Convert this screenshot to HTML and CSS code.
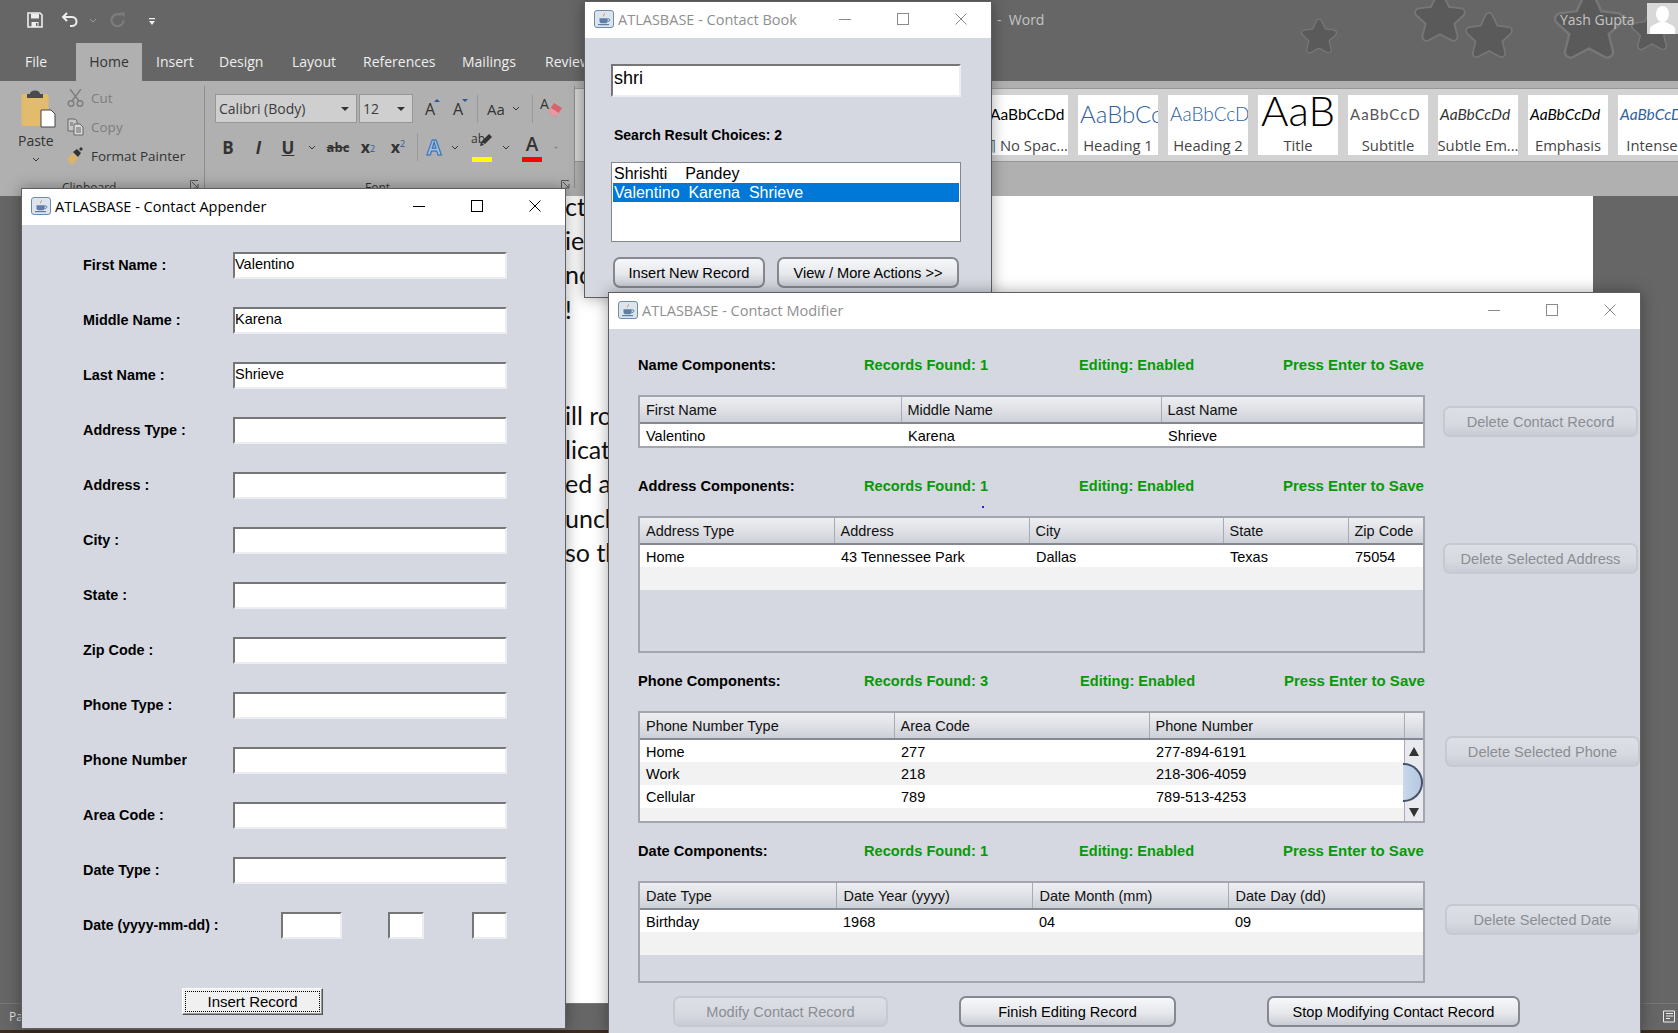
FILE: index.html
```html
<!DOCTYPE html>
<html lang="en">
<head>
  <meta charset="UTF-8" />
  <title>ATLASBASE</title>
  <link rel="stylesheet" href="styles.css">
</head>
<body>
  <svg class="defs" width="0" height="0">
    <symbol id="java" viewBox="0 0 20 18">
      <rect x="0.5" y="0.5" width="19" height="17" rx="2.5" fill="#dce4ee" stroke="#6f8ba8"/>
      <path d="M10.5 2.5c1.5 1.6-1.4 2.6-.4 4.6-2-1.6.7-2.8.4-4.6z" fill="#d9772a"/>
      <path d="M5.5 8.2h8.2v3c0 1.3-1 2-2 2H7.5c-1 0-2-.7-2-2z" fill="#5d7fa6"/>
      <path d="M13.7 9h1.3c1.4 0 1.4 2.4-1.3 2.6" fill="none" stroke="#5d7fa6"/>
      <path d="M4 14.6h11" stroke="#5d7fa6" stroke-width="1.2"/>
    </symbol>
    <symbol id="ctl-min" viewBox="0 0 12 12"><path d="M0 6.5h12" stroke="currentColor" fill="none"/></symbol>
    <symbol id="ctl-max" viewBox="0 0 12 12"><rect x="0.5" y="0.5" width="11" height="11" stroke="currentColor" fill="none"/></symbol>
    <symbol id="ctl-close" viewBox="0 0 12 12"><path d="M0.5 0.5l11 11M11.5 0.5l-11 11" stroke="currentColor" fill="none"/></symbol>
    <symbol id="chev" viewBox="0 0 8 5"><path d="M1 1l3 3 3-3" stroke="currentColor" fill="none"/></symbol>
    <symbol id="star" viewBox="0 0 60 60">
      <path d="M30 8l7 15 16 2-12 11 4 16-15-8-15 8 4-16L7 25l16-2z" fill="none" stroke="#777" stroke-width="11" stroke-linejoin="round"/>
      <path d="M30 8l7 15 16 2-12 11 4 16-15-8-15 8 4-16L7 25l16-2z" fill="#5a5a5a" stroke="#5a5a5a" stroke-width="7" stroke-linejoin="round"/>
    </symbol>
  </svg>

  <div class="word">
    <div class="titlebar">
      <svg class="qat-save" width="16" height="16" viewBox="0 0 16 16"><path d="M1 1h12l2 2v12H1z" fill="none" stroke="#eee" stroke-width="1.6"/><path d="M4 1.5h8v5H4zM4.5 10h7v5h-7z" fill="#eee"/><path d="M9 11h1.5v3H9z" fill="#666"/></svg>
      <svg class="qat-undo" width="18" height="16" viewBox="0 0 18 16"><path d="M6 1L2 5l4 4" fill="none" stroke="#eee" stroke-width="2"/><path d="M2.5 5H11c6 0 6 9 0 9H9" fill="none" stroke="#eee" stroke-width="2"/></svg>
      <svg class="qat-chev" width="8" height="5"><use href="#chev"/></svg>
      <svg class="qat-redo" width="16" height="16" viewBox="0 0 16 16"><path d="M11 3.2a6 6 0 1 0 2.6 5" fill="none" stroke="#7d7d7d" stroke-width="2.2"/><path d="M9.5 0.5h5v5z" fill="#7d7d7d"/></svg>
      <svg class="qat-more" width="6" height="8" viewBox="0 0 6 8"><path d="M0 0h6v1.2H0zM0 3h6L3 7z" fill="#eee"/></svg>
      <svg class="star s1" width="38" height="38"><use href="#star"/></svg>
      <svg class="star s2" width="54" height="54"><use href="#star"/></svg>
      <svg class="star s3" width="50" height="50"><use href="#star"/></svg>
      <svg class="star s4" width="74" height="74"><use href="#star"/></svg>
      <svg class="star s5" width="44" height="44"><use href="#star"/></svg>
      <span class="doc-name">-&nbsp; Word</span>
      <span class="user-name">Yash Gupta</span>
      <div class="avatar">
        <svg width="31" height="31" viewBox="0 0 31 31"><ellipse cx="15.5" cy="11" rx="6.5" ry="8" fill="#fff"/><path d="M3 31v-5c0-4 7-5 9-7h7c2 2 9 3 9 7v5z" fill="#fff"/></svg>
      </div>
    </div>

    <div class="tabs">
      <span class="tab tab-file">File</span>
      <span class="tab tab-home">Home</span>
      <span class="tab tab-insert">Insert</span>
      <span class="tab tab-design">Design</span>
      <span class="tab tab-layout">Layout</span>
      <span class="tab tab-refs">References</span>
      <span class="tab tab-mail">Mailings</span>
      <span class="tab tab-review">Review</span>
    </div>

    <div class="ribbon">
      <div class="group group-clip">
        <div class="paste">
          <svg width="35" height="38" viewBox="0 0 35 38">
            <rect x="0.5" y="4" width="27" height="32" rx="2" fill="#e3bb6c"/>
            <path d="M9 4c0-2 2-3.500 5-3.500S19 2 19 4h3v4H6V4z" fill="#4a4a4a"/>
            <path d="M20 20h10l4 4v13H20z" fill="#fff" stroke="#444"/>
          </svg>
          <span class="paste-label">Paste</span>
          <svg class="chev-paste" width="8" height="5"><use href="#chev"/></svg>
        </div>
        <div class="clip-tools">
          <div class="clip-row muted">
            <svg width="17" height="18" viewBox="0 0 17 18"><path d="M3 0l9 12M14 0L5 12" stroke="#7d7d7d" stroke-width="1.4" fill="none"/><circle cx="4" cy="14.500" r="2.800" fill="none" stroke="#7d7d7d" stroke-width="1.400"/><circle cx="13" cy="14.500" r="2.800" fill="none" stroke="#7d7d7d" stroke-width="1.400"/></svg>
            <span>Cut</span>
          </div>
          <div class="clip-row muted">
            <svg width="17" height="18" viewBox="0 0 17 18"><path d="M1 1h7l2 2v10H1z" fill="#c8c8c8" stroke="#666"/><path d="M7 6h6l3 3v8H7z" fill="#d8d8d8" stroke="#666"/><path d="M9 10h5M9 12h5M9 14h5M3 5h3M3 7h3" stroke="#666"/></svg>
            <span>Copy</span>
          </div>
          <div class="clip-row">
            <svg width="17" height="18" viewBox="0 0 17 18"><path d="M0 12l6-6 5 5-5 6H3z" fill="#dcb36c"/><path d="M6 5l4-3 4 4-3 4z" fill="#333"/><path d="M14 0l2 2-2 2-2-2z" fill="#333"/></svg>
            <span>Format Painter</span>
          </div>
        </div>
        <span class="group-label label-clip">Clipboard</span>
        <svg class="launcher launch-clip" width="9" height="9" viewBox="0 0 9 9"><path d="M0.500 8V0.500H8M2 2l6 6M8 4v4H4" stroke="#555" fill="none"/></svg>
      </div>

      <div class="group group-font">
        <div class="font-row row-top">
          <div class="combo combo-font"><span>Calibri (Body)</span><i class="caret"></i></div>
          <div class="combo combo-size"><span>12</span><i class="caret"></i></div>
          <span class="tool w34 glyph-a">A<i class="tip"></i></span>
          <span class="tool w22 glyph-a">A<i class="tip tip-down"></i></span>
          <span class="tool-sep w16"></span>
          <span class="tool w22 glyph-aa">Aa</span>
          <span class="tool w18"><svg width="8" height="5"><use href="#chev"/></svg></span>
          <span class="tool-sep w14"></span>
          <span class="tool w26 glyph-clear">
            <span>A</span>
            <svg width="18" height="16" viewBox="0 0 18 16"><path d="M9 1l8 5-6 9-8-5z" fill="#d8626e"/><path d="M3 10l3-4 8 5-3 4z" fill="#e89aa2"/></svg>
          </span>
        </div>
        <div class="font-row row-bottom">
          <span class="tool w30 glyph-b">B</span>
          <span class="tool w31 glyph-i">I</span>
          <span class="tool w28 glyph-u">U</span>
          <span class="tool w20"><svg width="8" height="5"><use href="#chev"/></svg></span>
          <span class="tool w32 glyph-abc">abc</span>
          <span class="tool w28 glyph-x">x<sub>2</sub></span>
          <span class="tool w32 glyph-x">x<sup>2</sup></span>
          <span class="tool-sep w6"></span>
          <span class="tool w28 glyph-blue">A</span>
          <span class="tool w14"><svg width="8" height="5"><use href="#chev"/></svg></span>
          <span class="tool w40 glyph-mark">
            <span>ab</span>
            <svg width="18" height="16" viewBox="0 0 18 16"><path d="M14 1l3 3-7 7-4-2z" fill="#333"/><path d="M6 9l3 3-4 1z" fill="#333"/></svg>
            <i class="bar bar-yellow"></i>
          </span>
          <span class="tool w8"><svg width="8" height="5"><use href="#chev"/></svg></span>
          <span class="tool w44 glyph-red">A<i class="bar bar-red"></i></span>
          <span class="tool w4"><svg width="8" height="5"><use href="#chev"/></svg></span>
        </div>
        <span class="group-label label-font">Font</span>
        <svg class="launcher launch-font" width="9" height="9" viewBox="0 0 9 9"><path d="M0.500 8V0.500H8M2 2l6 6M8 4v4H4" stroke="#555" fill="none"/></svg>
      </div>

      <div class="group group-styles">
        <div class="gallery">
          <div class="style-tile"><span class="sample s-normal">AaBbCcDd</span><span class="style-name name-clip">¶ No Spac...</span></div>
          <div class="style-tile"><span class="sample s-h1">AaBbCc</span><span class="style-name">Heading 1</span></div>
          <div class="style-tile"><span class="sample s-h2">AaBbCcD</span><span class="style-name">Heading 2</span></div>
          <div class="style-tile"><span class="sample s-title">AaB</span><span class="style-name">Title</span></div>
          <div class="style-tile"><span class="sample s-sub">AaBbCcD</span><span class="style-name">Subtitle</span></div>
          <div class="style-tile"><span class="sample s-subtle">AaBbCcDd</span><span class="style-name">Subtle Em...</span></div>
          <div class="style-tile"><span class="sample s-emph">AaBbCcDd</span><span class="style-name">Emphasis</span></div>
          <div class="style-tile"><span class="sample s-intense">AaBbCcDd</span><span class="style-name">Intense E</span></div>
        </div>
        <span class="group-label label-styles">Styles</span>
      </div>
    </div>

    <div class="doc">
      <div class="page">
        <p>ct</p>
        <p>ie</p>
        <p>nd</p>
        <p>!</p>
        <p class="para-gap">ill ro</p>
        <p>licat</p>
        <p>ed a</p>
        <p>unch</p>
        <p>so th</p>
      </div>
    </div>

    <div class="statusbar">
      <span class="status-text">Page</span>
      <svg class="status-icon" width="14" height="14" viewBox="0 0 14 14"><path d="M0.500 1h11v11h-11zM3 3.500h7M3 6h7M3 8.500h4" stroke="#eee" fill="none"/></svg>
    </div>
    <div class="taskbar-edge"></div>
  </div>

  <!-- Contact Appender -->
  <div class="win win-appender">
    <div class="win-title">
      <svg class="java-icon" width="20" height="18"><use href="#java"/></svg>
      <span class="win-name">ATLASBASE - Contact Appender</span>
      <div class="win-ctl">
        <span><svg width="12" height="12"><use href="#ctl-min"/></svg></span>
        <span><svg width="12" height="12"><use href="#ctl-max"/></svg></span>
        <span><svg width="12" height="12"><use href="#ctl-close"/></svg></span>
      </div>
    </div>
    <div class="win-body appender-body">
      <div class="form-grid">
        <label>First Name :</label><div class="field">Valentino</div>
        <label>Middle Name :</label><div class="field">Karena</div>
        <label>Last Name :</label><div class="field">Shrieve</div>
        <label>Address Type :</label><div class="field"></div>
        <label>Address :</label><div class="field"></div>
        <label>City :</label><div class="field"></div>
        <label>State :</label><div class="field"></div>
        <label>Zip Code :</label><div class="field"></div>
        <label>Phone Type :</label><div class="field"></div>
        <label class="label-cut">Phone Number</label><div class="field"></div>
        <label>Area Code :</label><div class="field"></div>
        <label>Date Type :</label><div class="field"></div>
        <label class="label-date">Date (yyyy-mm-dd) :</label>
        <div class="date-fields">
          <div class="field f-year"></div>
          <div class="field f-month"></div>
          <div class="field f-day"></div>
        </div>
      </div>
      <button class="insert-btn"><span>Insert Record</span></button>
    </div>
  </div>

  <!-- Contact Book -->
  <div class="win win-book inactive">
    <div class="win-title">
      <svg class="java-icon" width="20" height="18"><use href="#java"/></svg>
      <span class="win-name">ATLASBASE - Contact Book</span>
      <div class="win-ctl">
        <span><svg width="12" height="12"><use href="#ctl-min"/></svg></span>
        <span><svg width="12" height="12"><use href="#ctl-max"/></svg></span>
        <span><svg width="12" height="12"><use href="#ctl-close"/></svg></span>
      </div>
    </div>
    <div class="win-body book-body">
      <div class="field search-field">shri</div>
      <div class="choices-label">Search Result Choices: 2</div>
      <div class="result-list">
        <div class="result">Shrishti    Pandey</div>
        <div class="result selected">Valentino  Karena  Shrieve</div>
      </div>
      <div class="book-actions">
        <button class="btn btn-new">Insert New Record</button>
        <button class="btn btn-view">View / More Actions &gt;&gt;</button>
      </div>
    </div>
  </div>

  <!-- Contact Modifier -->
  <div class="win win-modifier inactive">
    <div class="win-title">
      <svg class="java-icon" width="20" height="18"><use href="#java"/></svg>
      <span class="win-name">ATLASBASE - Contact Modifier</span>
      <div class="win-ctl">
        <span><svg width="12" height="12"><use href="#ctl-min"/></svg></span>
        <span><svg width="12" height="12"><use href="#ctl-max"/></svg></span>
        <span><svg width="12" height="12"><use href="#ctl-close"/></svg></span>
      </div>
    </div>
    <div class="win-body modifier-body">
      <i class="blue-dot"></i>

      <section class="comp comp-name">
        <div class="comp-main">
          <div class="comp-head">
            <b>Name Components:</b><b class="ok">Records Found: 1</b><b class="ok">Editing: Enabled</b><b class="ok">Press Enter to Save</b>
          </div>
          <div class="tbl">
            <table class="t-name">
              <thead><tr><th>First Name</th><th>Middle Name</th><th>Last Name</th></tr></thead>
              <tbody><tr><td>Valentino</td><td>Karena</td><td>Shrieve</td></tr></tbody>
            </table>
          </div>
        </div>
        <button class="btn off del-contact">Delete Contact Record</button>
      </section>

      <section class="comp comp-address">
        <div class="comp-main">
          <div class="comp-head">
            <b>Address Components:</b><b class="ok">Records Found: 1</b><b class="ok">Editing: Enabled</b><b class="ok">Press Enter to Save</b>
          </div>
          <div class="tbl tbl-address">
            <table class="t-address">
              <thead><tr><th>Address Type</th><th>Address</th><th>City</th><th>State</th><th>Zip Code</th></tr></thead>
              <tbody>
                <tr><td>Home</td><td>43 Tennessee Park</td><td>Dallas</td><td>Texas</td><td>75054</td></tr>
                <tr class="alt"><td></td><td></td><td></td><td></td><td></td></tr>
              </tbody>
            </table>
          </div>
        </div>
        <button class="btn off del-address">Delete Selected Address</button>
      </section>

      <section class="comp comp-phone">
        <div class="comp-main">
          <div class="comp-head head-phone">
            <b>Phone Components:</b><b class="ok">Records Found: 3</b><b class="ok">Editing: Enabled</b><b class="ok">Press Enter to Save</b>
          </div>
          <div class="tbl tbl-phone">
            <table class="t-phone">
              <thead><tr><th>Phone Number Type</th><th>Area Code</th><th>Phone Number</th><th></th></tr></thead>
              <tbody>
                <tr><td>Home</td><td>277</td><td>277-894-6191</td>
                  <td rowspan="4" class="sb-cell">
                    <div class="scrollbar">
                      <i class="arrow-up"></i>
                      <i class="thumb"></i>
                      <i class="arrow-down"></i>
                    </div>
                  </td>
                </tr>
                <tr class="alt"><td>Work</td><td>218</td><td>218-306-4059</td></tr>
                <tr><td>Cellular</td><td>789</td><td>789-513-4253</td></tr>
                <tr class="alt short"><td></td><td></td><td></td></tr>
              </tbody>
            </table>
          </div>
        </div>
        <button class="btn off del-phone">Delete Selected Phone</button>
      </section>

      <section class="comp comp-date">
        <div class="comp-main">
          <div class="comp-head">
            <b>Date Components:</b><b class="ok">Records Found: 1</b><b class="ok">Editing: Enabled</b><b class="ok">Press Enter to Save</b>
          </div>
          <div class="tbl tbl-date">
            <table class="t-date">
              <thead><tr><th>Date Type</th><th>Date Year (yyyy)</th><th>Date Month (mm)</th><th>Date Day (dd)</th></tr></thead>
              <tbody>
                <tr><td>Birthday</td><td>1968</td><td>04</td><td>09</td></tr>
                <tr class="alt"><td></td><td></td><td></td><td></td></tr>
              </tbody>
            </table>
          </div>
        </div>
        <button class="btn off del-date">Delete Selected Date</button>
      </section>

      <div class="modifier-actions">
        <button class="btn off btn-modify">Modify Contact Record</button>
        <button class="btn btn-finish">Finish Editing Record</button>
        <button class="btn btn-stop">Stop Modifying Contact Record</button>
      </div>
    </div>
  </div>
</body>
</html>
```

FILE: styles.css
```css
html, body { margin: 0; padding: 0; }
body { width: 1678px; height: 1033px; overflow: hidden; position: relative; background: #666; font-family: "Liberation Sans", Arial, sans-serif; color: #000; }
.defs { position: absolute; }
button { font-family: inherit; }
p { margin: 0; }

/* word behind the windows */
.word { height: 1033px; display: flex; flex-direction: column; font-family: "Open Sans", sans-serif; background: #666; }
.titlebar { height: 43px; flex: none; position: relative; color: #ddd; }
.qat-save { position: absolute; left: 27px; top: 12px; }
.qat-undo { position: absolute; left: 61px; top: 12px; }
.qat-chev { position: absolute; left: 89px; top: 18px; color: #999; }
.qat-redo { position: absolute; left: 110px; top: 12px; }
.qat-more { position: absolute; left: 149px; top: 18px; }
.star { position: absolute; }
.s1 { left: 1300px; top: 17px; }
.s2 { left: 1413px; top: -10px; }
.s3 { left: 1464px; top: 10px; }
.s4 { left: 1552px; top: -12px; }
.s5 { left: 1630px; top: 8px; }
.doc-name { position: absolute; left: 997px; top: 10px; font-size: 14px; color: #c4c4c4; }
.user-name { position: absolute; left: 1560px; top: 10px; font-size: 14px; color: #c4c4c4; }
.avatar { position: absolute; left: 1647px; top: 3px; width: 31px; height: 31px; background: #d8d8d8; overflow: hidden; }

.tabs { height: 38px; flex: none; display: flex; font-size: 14px; color: #eee; }
.tab { line-height: 38px; flex: none; }
.tab-file { margin-left: 25px; width: 51px; }
.tab-home { width: 66px; background: #b0b0b0; color: #333; text-align: center; }
.tab-insert { margin-left: 14px; width: 63px; }
.tab-design { width: 73px; }
.tab-layout { width: 71px; }
.tab-refs { width: 99px; }
.tab-mail { width: 83px; }

.ribbon { height: 115px; flex: none; background: #b0b0b0; display: flex; color: #333; position: relative; }
.group { position: relative; flex: none; }
.group-clip { width: 204px; display: flex; border-right: 1px solid #8c8c8c; margin: 5px 0 8px; height: 102px; }
.paste { width: 58px; padding: 4px 0 0 21px; box-sizing: border-box; flex: none; position: relative; }
.paste svg { display: block; }
.paste-label { position: absolute; left: 18px; top: 45px; font-size: 14px; }
.chev-paste { position: absolute; left: 32px; top: 71px; }
.clip-tools { margin: -3px 0 0 9px; }
.clip-row { height: 29px; display: flex; align-items: center; gap: 7px; font-size: 13.5px; white-space: nowrap; }
.clip-row.muted { color: #7d7d7d; }
.group-label { position: absolute; font-size: 12px; color: #333; }
.label-clip { left: 62px; top: 93px; }
.launch-clip { position: absolute; left: 190px; top: 94px; }

.group-font { width: 370px; height: 102px; margin: 5px 0 8px; border-right: 1px solid #8c8c8c; padding-left: 8px; box-sizing: border-box; }
.font-row { display: flex; align-items: center; }
.row-top { height: 29px; margin: 8px 0 0 2px; }
.row-bottom { height: 30px; margin-top: 9px; }
.combo { height: 29px; box-sizing: border-box; background: #cfcfcf; border: 1px solid #979797; display: flex; align-items: center; justify-content: space-between; padding: 0 7px 0 3px; font-size: 14px; flex: none; color: #3c3c3c; }
.combo-font { width: 142px; margin-right: 2px; }
.combo-size { width: 54px; }
.caret { border: 4px solid transparent; border-top-color: #333; border-bottom: 0; }
.tool { flex: none; text-align: center; position: relative; display: flex; align-items: center; justify-content: center; height: 28px; color: #333; }
.tool i { font-style: normal; }
.tool-sep { flex: none; height: 28px; position: relative; }
.tool-sep::after { content: ""; position: absolute; left: 50%; top: 0; bottom: 0; width: 1px; background: #999; }
.w4 { width: 4px; } .w6 { width: 6px; } .w8 { width: 8px; } .w14 { width: 14px; } .w16 { width: 16px; } .w18 { width: 18px; } .w20 { width: 20px; } .w22 { width: 22px; }
.w26 { width: 26px; } .w28 { width: 28px; } .w30 { width: 30px; } .w31 { width: 31px; } .w32 { width: 32px; } .w34 { width: 34px; } .w40 { width: 40px; } .w44 { width: 44px; }
.glyph-a { font-size: 16px; }
.tip { position: absolute; right: 7px; top: 4px; border: 3px solid transparent; border-bottom: 3px solid #2a5b94; border-top: 0; }
.w22 .tip { right: 1px; }
.tip-down { border-bottom: 0; border-top: 3px solid #2a5b94; }
.glyph-aa { font-size: 15px; }
.glyph-clear > span { position: absolute; left: 1px; top: -1px; font-size: 14px; }
.glyph-clear svg { position: absolute; left: 6px; top: 7px; }
.glyph-b { font-size: 17px; font-weight: 700; }
.glyph-i { font-size: 17px; font-weight: 700; font-style: italic; }
.glyph-u { font-size: 17px; font-weight: 700; text-decoration: underline; }
.glyph-abc { font-size: 13px; font-weight: 700; text-decoration: line-through; }
.glyph-x { font-size: 16px; font-weight: 700; line-height: 28px; }
.glyph-x sub, .glyph-x sup { font-size: 9px; font-weight: 400; color: #2a5b94; line-height: 0; }
.glyph-x sup { position: relative; top: -3px; }
.glyph-x sub { position: relative; top: 2px; }
.glyph-blue { font-size: 21px; font-weight: 700; color: #a9c4e6; -webkit-text-stroke: 1px #2a6db5; }
.glyph-mark > span { position: absolute; left: 9px; top: -3px; font-size: 12px; }
.glyph-mark svg { position: absolute; left: 13px; top: 0; }
.glyph-red { font-size: 19px; font-weight: 600; align-items: flex-start; line-height: 22px; }
.bar { position: absolute; left: 50%; margin-left: -10px; bottom: -1px; width: 20px; height: 5px; }
.bar-yellow { background: #ffff00; }
.bar-red { background: #ff0000; }
.label-font { left: 160px; top: 93px; }
.launch-font { position: absolute; left: 356px; top: 94px; }

.group-styles { flex: 1; min-width: 0; overflow: hidden; }
.gallery { margin-top: 7px; height: 74px; box-sizing: border-box; padding: 6px 0 0 413px; background: #d2d2d2; border-top: 1px solid #979797; border-bottom: 1px solid #979797; display: flex; gap: 10px; }
.style-tile { flex: none; width: 80px; height: 60px; background: #fff; display: flex; flex-direction: column; align-items: center; overflow: hidden; color: #444; }
.sample { height: 38px; line-height: 38px; width: 78px; white-space: nowrap; overflow: hidden; font-family: "Lato", sans-serif; font-size: 15.500px; flex: none; text-align: left; padding-left: 2px; color: #000; }
.s-h1 { font-size: 24px; color: #2f5f9e; font-weight: 300; }
.s-h2 { font-size: 19px; color: #2f5f9e; font-weight: 300; }
.s-title { font-size: 42px; line-height: 30px; font-weight: 300; padding-left: 4px; }
.s-sub { font-size: 15px; color: #555; letter-spacing: 1px; }
.s-subtle { font-style: italic; color: #333; }
.s-emph { font-style: italic; }
.s-intense { font-style: italic; color: #2f5f9e; }
.style-name { font-size: 14.800px; line-height: 24px; white-space: nowrap; }
.name-clip { align-self: flex-end; }
.label-styles { left: 293px; top: 97px; }

.doc { flex: 1; min-height: 0; background: #666; display: flex; overflow: hidden; }
.page { margin-left: 300px; width: 1293px; box-sizing: border-box; padding-left: 265px; background: #fff; font-family: "Lato", sans-serif; font-size: 25px; color: #111; }
.page p { line-height: 20px; margin-bottom: 14.200px; white-space: nowrap; }
.page .para-gap { margin-top: 86.500px; }
.statusbar { height: 27px; flex: none; background: #666; border-top: 1px solid #777; box-sizing: border-box; position: relative; color: #ddd; font-size: 12px; line-height: 25px; padding-left: 9px; }
.status-icon { position: absolute; left: 1663px; top: 6px; }
.taskbar-edge { height: 3px; flex: none; background: #3b2a1e; }

/* swing windows */
.win { position: absolute; box-sizing: border-box; background: #d5d8e0; border: 1px solid #5f5f5f; box-shadow: 0 0 14px rgba(0, 0, 0, 0.35); display: flex; flex-direction: column; overflow: hidden; }
.win-appender { left: 21px; top: 188px; width: 545px; height: 841px; }
.win-book { left: 584px; top: 1px; width: 408px; height: 297px; }
.win-modifier { left: 608px; top: 292px; width: 1033px; height: 741px; border-bottom: 0; }
.win-title { height: 36px; box-sizing: border-box; padding: 0 0 2px 9px; flex: none; background: #fff; display: flex; align-items: center; font-family: "Open Sans", sans-serif; font-size: 14.500px; color: #000; }
.inactive .win-title { color: #8f8f8f; }
.java-icon { flex: none; margin-right: 4px; }
.win-name { flex: 1; white-space: nowrap; }
.win-ctl { display: flex; padding-right: 1px; }
.win-ctl span { width: 58px; height: 34px; display: flex; align-items: center; justify-content: center; }
.inactive .win-ctl { color: #8a8a8a; }
.win-body { flex: 1; min-height: 0; position: relative; }

.field { box-sizing: border-box; height: 27px; background: #fff; border: 2px solid; border-color: #767676 #ecedf0 #ecedf0 #767676; font-size: 14.500px; line-height: 21px; white-space: nowrap; }

.appender-body { padding: 27px 0 0 61px; }
.form-grid { display: grid; grid-template-columns: 150px 274px; row-gap: 28px; align-items: center; }
.form-grid label { font-size: 14.400px; font-weight: 700; white-space: nowrap; margin-bottom: 2px; }
.form-grid .label-cut { width: 104px; overflow: hidden; letter-spacing: 0.15px; }
.form-grid .label-date { font-size: 14.100px; }
.date-fields { display: flex; padding-left: 48px; }
.f-year { width: 61px; }
.f-month { width: 36px; margin-left: 46px; }
.f-day { width: 35px; margin-left: 48px; }
.insert-btn { display: block; margin: 49px 0 0 99px; width: 141px; height: 27px; padding: 2px; background: #f0f0f0; border: 1px solid; border-color: #fff #555 #555 #fff; box-shadow: inset -1px -1px 0 #999; font-size: 15px; }
.insert-btn span { display: block; height: 100%; line-height: 20px; border: 1px dotted #000; box-sizing: border-box; }

.btn { box-sizing: border-box; height: 31px; padding: 0; border: 2px solid #85888f; border-radius: 7px; background: linear-gradient(#f6f7f9, #e6e8ec 55%, #c9ccd4); font-size: 14.600px; color: #000; white-space: nowrap; flex: none; }
.btn.off { border-color: #c6c9d1; background: linear-gradient(#dcdfe5, #d6d9e0 60%, #c9ccd4); color: #8b8d93; }

.book-body { padding: 26px 0 0 26px; }
.search-field { width: 350px; height: 33px; font-size: 18px; line-height: 25px; padding-left: 1px; }
.choices-label { margin: 28px 0 0 3px; font-size: 14px; font-weight: 700; line-height: 20px; }
.result-list { width: 350px; height: 80px; box-sizing: border-box; margin-top: 17px; background: #fff; border: 1px solid #85888f; padding: 1px; font-size: 16px; }
.result { height: 19px; line-height: 19px; padding-left: 1px; white-space: pre; }
.result.selected { background: #0078d7; color: #fff; }
.book-actions { display: flex; margin: 15px 0 0 2px; gap: 12px; }
.btn-new { width: 152px; }
.btn-view { width: 182px; }

.modifier-body { padding: 26px 0 0 29px; }
.blue-dot { position: absolute; left: 373px; top: 177px; width: 2px; height: 2px; background: #2222cc; }
.comp { display: flex; align-items: flex-start; gap: 18px; }
.comp-main { width: 787px; flex: none; }
.comp-head { display: grid; grid-template-columns: 226px 215px 204px 142px; height: 20px; line-height: 20px; font-size: 14.600px; white-space: nowrap; }
.head-phone { grid-template-columns: 226px 216px 204px 141px; }
.ok { color: #069b06; font-size: 14.600px; }
.ok:last-child { font-size: 15px; }
.comp-address { margin-top: 28px; }
.comp-phone, .comp-date { margin-top: 18px; }

.tbl { margin-top: 20px; box-sizing: border-box; border: 2px solid #a3a6ae; overflow: hidden; }
.tbl table { width: 100%; border-collapse: collapse; table-layout: fixed; font-size: 14.500px; }
.tbl-address { height: 137px; }
.tbl-phone { height: 112px; }
.tbl-date { height: 102px; }
th { height: 26px; padding: 0 0 0 6px; text-align: left; font-weight: 400; background: linear-gradient(#eceef1, #dfe1e6 50%, #cdd0d8); border-right: 1px solid #a8abb3; border-bottom: 2px solid #85888f; box-sizing: border-box; white-space: nowrap; overflow: hidden; color: #111; }
th:last-child { border-right: 0; }
td { height: 23px; padding: 0 0 0 6px; background: #fff; box-sizing: border-box; white-space: nowrap; }
td:not(:first-child), .t-date th:not(:first-child) { padding-left: 7px; }
tbody tr:first-child td { padding-top: 1px; }
.alt td { background: #f2f2f2; }
.short td { height: 16px; }

.t-name th:nth-child(1) { width: 261px; }
.t-name th:nth-child(2) { width: 260px; }
.t-address th:nth-child(1) { width: 194px; }
.t-address th:nth-child(2) { width: 195px; }
.t-address th:nth-child(3) { width: 194px; }
.t-address th:nth-child(4) { width: 125px; }
.t-phone th:nth-child(1) { width: 254px; }
.t-phone th:nth-child(2) { width: 255px; }
.t-phone th:nth-child(3) { width: 255px; }
.t-date th:nth-child(1) { width: 196px; }
.t-date th:nth-child(2) { width: 196px; }
.t-date th:nth-child(3) { width: 196px; }

tbody .sb-cell { padding: 0; background: #e9eaef; vertical-align: top; border-left: 1px solid #a8abb3; }
.scrollbar { height: 82px; position: relative; }
.arrow-up, .arrow-down { position: absolute; left: 4px; border: 5px solid transparent; }
.arrow-up { top: 6px; border-top: 0; border-bottom: 9px solid #333; }
.arrow-down { bottom: 6px; border-bottom: 0; border-top: 9px solid #333; }
.thumb { position: absolute; left: -2px; top: 22px; width: 20px; height: 39px; box-sizing: border-box; border: 2px solid #43536b; border-left: 0; border-radius: 0 20px 20px 0 / 0 20px 20px 0; background: linear-gradient(90deg, #c9d8ea, #b4c8e0); }

.del-contact { width: 195px; margin-top: 51px; }
.del-address { width: 195px; margin-top: 67px; }
.del-phone { width: 195px; margin: 65px 0 0 2px; }
.del-date { width: 195px; margin: 63px 0 0 2px; }

.modifier-actions { display: flex; margin: 13px 0 0 35px; }
.btn-modify { width: 215px; }
.btn-finish { width: 217px; margin-left: 71px; }
.btn-stop { width: 253px; margin-left: 91px; }
```
